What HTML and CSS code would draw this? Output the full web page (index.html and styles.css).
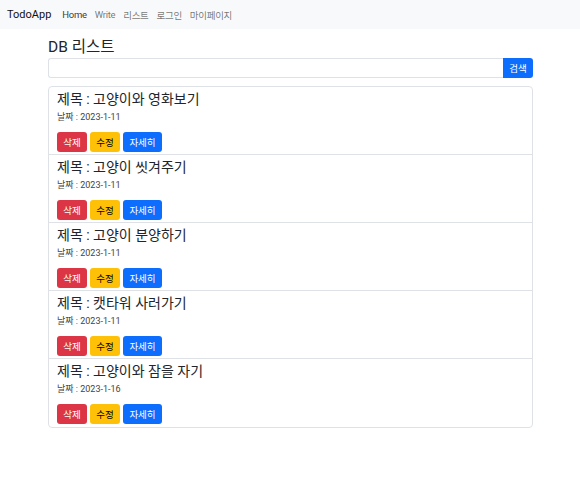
FILE: index.html
```html
<!DOCTYPE html>
<html lang="ko">
<head>
<meta charset="utf-8">
<title>TodoApp</title>
<link rel="stylesheet" href="styles.css">
</head>
<body>
<nav class="navbar">
  <span class="brand">TodoApp</span>
  <a class="nav-link active">Home</a>
  <a class="nav-link">Write</a>
  <a class="nav-link">리스트</a>
  <a class="nav-link">로그인</a>
  <a class="nav-link">마이페이지</a>
</nav>
<main class="container">
  <h4 class="page-title">DB 리스트</h4>
  <div class="search">
    <input class="search-input" type="text">
    <button class="search-btn">검색</button>
  </div>
  <ul class="list">
    <li class="item">
      <h4 class="item-title">제목 : 고양이와 영화보기</h4>
      <p class="item-date">날짜 : 2023-1-11</p>
      <div class="actions"><button class="btn danger">삭제</button><button class="btn warning">수정</button><button class="btn primary">자세히</button></div>
    </li>
    <li class="item">
      <h4 class="item-title">제목 : 고양이 씻겨주기</h4>
      <p class="item-date">날짜 : 2023-1-11</p>
      <div class="actions"><button class="btn danger">삭제</button><button class="btn warning">수정</button><button class="btn primary">자세히</button></div>
    </li>
    <li class="item">
      <h4 class="item-title">제목 : 고양이 분양하기</h4>
      <p class="item-date">날짜 : 2023-1-11</p>
      <div class="actions"><button class="btn danger">삭제</button><button class="btn warning">수정</button><button class="btn primary">자세히</button></div>
    </li>
    <li class="item">
      <h4 class="item-title">제목 : 캣타워 사러가기</h4>
      <p class="item-date">날짜 : 2023-1-11</p>
      <div class="actions"><button class="btn danger">삭제</button><button class="btn warning">수정</button><button class="btn primary">자세히</button></div>
    </li>
    <li class="item">
      <h4 class="item-title">제목 : 고양이와 잠을 자기</h4>
      <p class="item-date">날짜 : 2023-1-16</p>
      <div class="actions"><button class="btn danger">삭제</button><button class="btn warning">수정</button><button class="btn primary">자세히</button></div>
    </li>
  </ul>
</main>
</body>
</html>
```
FILE: styles.css
```css
* { box-sizing: border-box; }
body {
  margin: 0;
  font-family: Roboto, "Noto Sans CJK KR", sans-serif;
  color: #212529;
  background: #fff;
}
.navbar {
  height: 29px;
  background: #f8f9fa;
  display: flex;
  align-items: center;
  padding: 0 7px;
}
.brand {
  font-size: 11px;
  color: #111;
  margin-right: 11px;
}
.nav-link {
  font-size: 9.5px;
  letter-spacing: -0.3px;
  color: rgba(0,0,0,0.55);
  margin-right: 8px;
}
.nav-link.active { color: rgba(0,0,0,0.8); }
.container {
  width: 485px;
  margin: 0 0 0 48px;
  padding-top: 8px;
}
.page-title {
  margin: 0;
  font-size: 15.5px;
  font-weight: 400;
  line-height: 20px;
  height: 21px;
}
.search {
  display: flex;
  height: 20px;
}
.search-input {
  flex: 1;
  height: 20px;
  border: 1px solid #dee2e6;
  border-right: none;
  border-radius: 3px 0 0 3px;
  margin: 0;
  padding: 0 6px;
}
.search-btn {
  width: 30px;
  height: 20px;
  margin: 0;
  padding: 0;
  border: none;
  border-radius: 0 3px 3px 0;
  background: #0d6efd;
  color: #fff;
  font-family: inherit;
  font-size: 9.5px;
}
.list {
  list-style: none;
  margin: 8px 0 0;
  padding: 0;
  border: 1px solid #dee2e6;
  border-radius: 4px;
}
.item {
  padding: 3px 8px 3px;
  border-bottom: 1px solid #dee2e6;
  height: 68px;
}
.item:last-child { border-bottom: none; height: 68px; }
.item-title {
  margin: 0;
  font-size: 14px;
  font-weight: 400;
  line-height: 18px;
}
.item-date {
  margin: 1px 0 0;
  font-size: 9px;
  line-height: 16px;
  color: #444;
}
.actions {
  display: flex;
  gap: 3px;
  margin-top: 7px;
}
.btn {
  height: 20px;
  padding: 0;
  border: none;
  border-radius: 3px;
  font-family: inherit;
  font-size: 9.5px;
  color: #fff;
}
.danger { background: #dc3545; width: 30px; }
.warning { background: #ffc107; color: #000; width: 30px; }
.primary { background: #0d6efd; width: 39px; }
```
